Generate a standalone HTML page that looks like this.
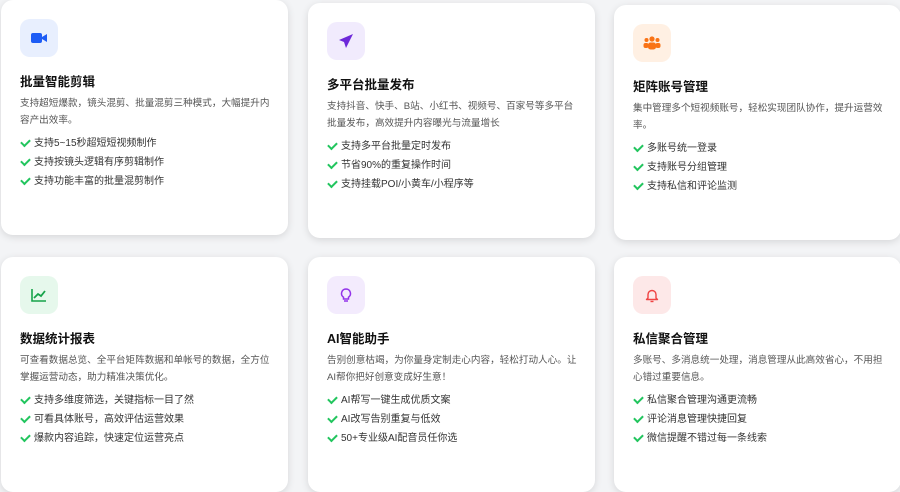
<!DOCTYPE html>
<html><head><meta charset="utf-8"><style>
*{margin:0;padding:0;box-sizing:border-box}
body{width:900px;height:491px;background:#f3f4f6;position:relative;overflow:hidden;font-family:"Liberation Sans","Noto Sans CJK SC",sans-serif}
.card{position:absolute;background:#fff;border-radius:12px;box-shadow:0 2px 8px rgba(0,0,0,.12);width:287px;height:235px;padding:19px 14px 19px 19px}
.ic{width:38px;height:38px;border-radius:10px;display:flex;align-items:center;justify-content:center}
h3{font-size:12.5px;font-weight:bold;color:#111;margin-top:17px;line-height:16px}
p{font-size:9.6px;color:#555;line-height:17px;margin-top:5px}
ul{list-style:none;margin-top:5px}
li{font-size:10px;color:#333;line-height:19px;padding-left:14px;position:relative}
li:before{content:"";position:absolute;left:1px;top:5px;width:7px;height:4px;border-left:2px solid #22c55e;border-bottom:2px solid #22c55e;transform:rotate(-45deg)}
</style></head><body>
<div class="card" style="left:1px;top:0">
<div class="ic" style="background:#e8effe"><svg width="16" height="12" viewBox="0 0 16 12"><rect x="0" y="1" width="11" height="10" rx="2" fill="#1d5cf5"/><path d="M11 5l5-3v8l-5-3z" fill="#1d5cf5"/></svg></div>
<h3>批量智能剪辑</h3>
<p>支持超短爆款，镜头混剪、批量混剪三种模式，大幅提升内容产出效率。</p>
<ul><li>支持5~15秒超短短视频制作</li><li>支持按镜头逻辑有序剪辑制作</li><li>支持功能丰富的批量混剪制作</li></ul></div>
<div class="card" style="left:308px;top:3px">
<div class="ic" style="background:#f1ebfd"><svg width="16" height="16" viewBox="0 0 16 16"><path d="M15 1L1 7l5 2 2 6z" fill="#6d28d9"/></svg></div>
<h3>多平台批量发布</h3>
<p>支持抖音、快手、B站、小红书、视频号、百家号等多平台批量发布，高效提升内容曝光与流量增长</p>
<ul><li>支持多平台批量定时发布</li><li>节省90%的重复操作时间</li><li>支持挂载POI/小黄车/小程序等</li></ul></div>
<div class="card" style="left:614px;top:5px">
<div class="ic" style="background:#fff0e3"><svg width="18" height="14" viewBox="0 0 18 14"><g fill="#f97316"><circle cx="9" cy="3" r="2.6"/><circle cx="3.5" cy="4" r="2"/><circle cx="14.5" cy="4" r="2"/><rect x="5" y="6.5" width="8" height="7" rx="2.5"/><rect x="0.5" y="7" width="5" height="5" rx="2"/><rect x="12.5" y="7" width="5" height="5" rx="2"/></g></svg></div>
<h3>矩阵账号管理</h3>
<p>集中管理多个短视频账号，轻松实现团队协作，提升运营效率。</p>
<ul><li>多账号统一登录</li><li>支持账号分组管理</li><li>支持私信和评论监测</li></ul></div>
<div class="card" style="left:1px;top:257px">
<div class="ic" style="background:#e6f8ec"><svg width="16" height="14" viewBox="0 0 16 14"><path d="M1 1v12h14" stroke="#16a34a" stroke-width="1.6" fill="none"/><path d="M3 10l4-4 3 2 4-5" stroke="#16a34a" stroke-width="1.8" fill="none"/></svg></div>
<h3>数据统计报表</h3>
<p>可查看数据总览、全平台矩阵数据和单帐号的数据，全方位掌握运营动态，助力精准决策优化。</p>
<ul><li>支持多维度筛选，关键指标一目了然</li><li>可看具体账号，高效评估运营效果</li><li>爆款内容追踪，快速定位运营亮点</li></ul></div>
<div class="card" style="left:308px;top:257px">
<div class="ic" style="background:#f3ebfd"><svg width="12" height="15" viewBox="0 0 12 15"><path d="M6 1a4.5 4.5 0 0 0-2.5 8.2V11h5V9.2A4.5 4.5 0 0 0 6 1z" stroke="#9333ea" stroke-width="1.5" fill="none"/><path d="M4 13h4" stroke="#9333ea" stroke-width="1.5"/></svg></div>
<h3>AI智能助手</h3>
<p>告别创意枯竭，为你量身定制走心内容，轻松打动人心。让AI帮你把好创意变成好生意！</p>
<ul><li>AI帮写一键生成优质文案</li><li>AI改写告别重复与低效</li><li>50+专业级AI配音员任你选</li></ul></div>
<div class="card" style="left:614px;top:257px">
<div class="ic" style="background:#fde8e8"><svg width="14" height="15" viewBox="0 0 14 15"><path d="M3 10V6.5a4 4 0 0 1 8 0V10l1.5 1.5h-11z" stroke="#ef4444" stroke-width="1.4" fill="none" stroke-linejoin="round"/><path d="M5.5 13.5h3" stroke="#ef4444" stroke-width="1.4"/></svg></div>
<h3>私信聚合管理</h3>
<p>多账号、多消息统一处理，消息管理从此高效省心，不用担心错过重要信息。</p>
<ul><li>私信聚合管理沟通更流畅</li><li>评论消息管理快捷回复</li><li>微信提醒不错过每一条线索</li></ul></div>
</body></html>
